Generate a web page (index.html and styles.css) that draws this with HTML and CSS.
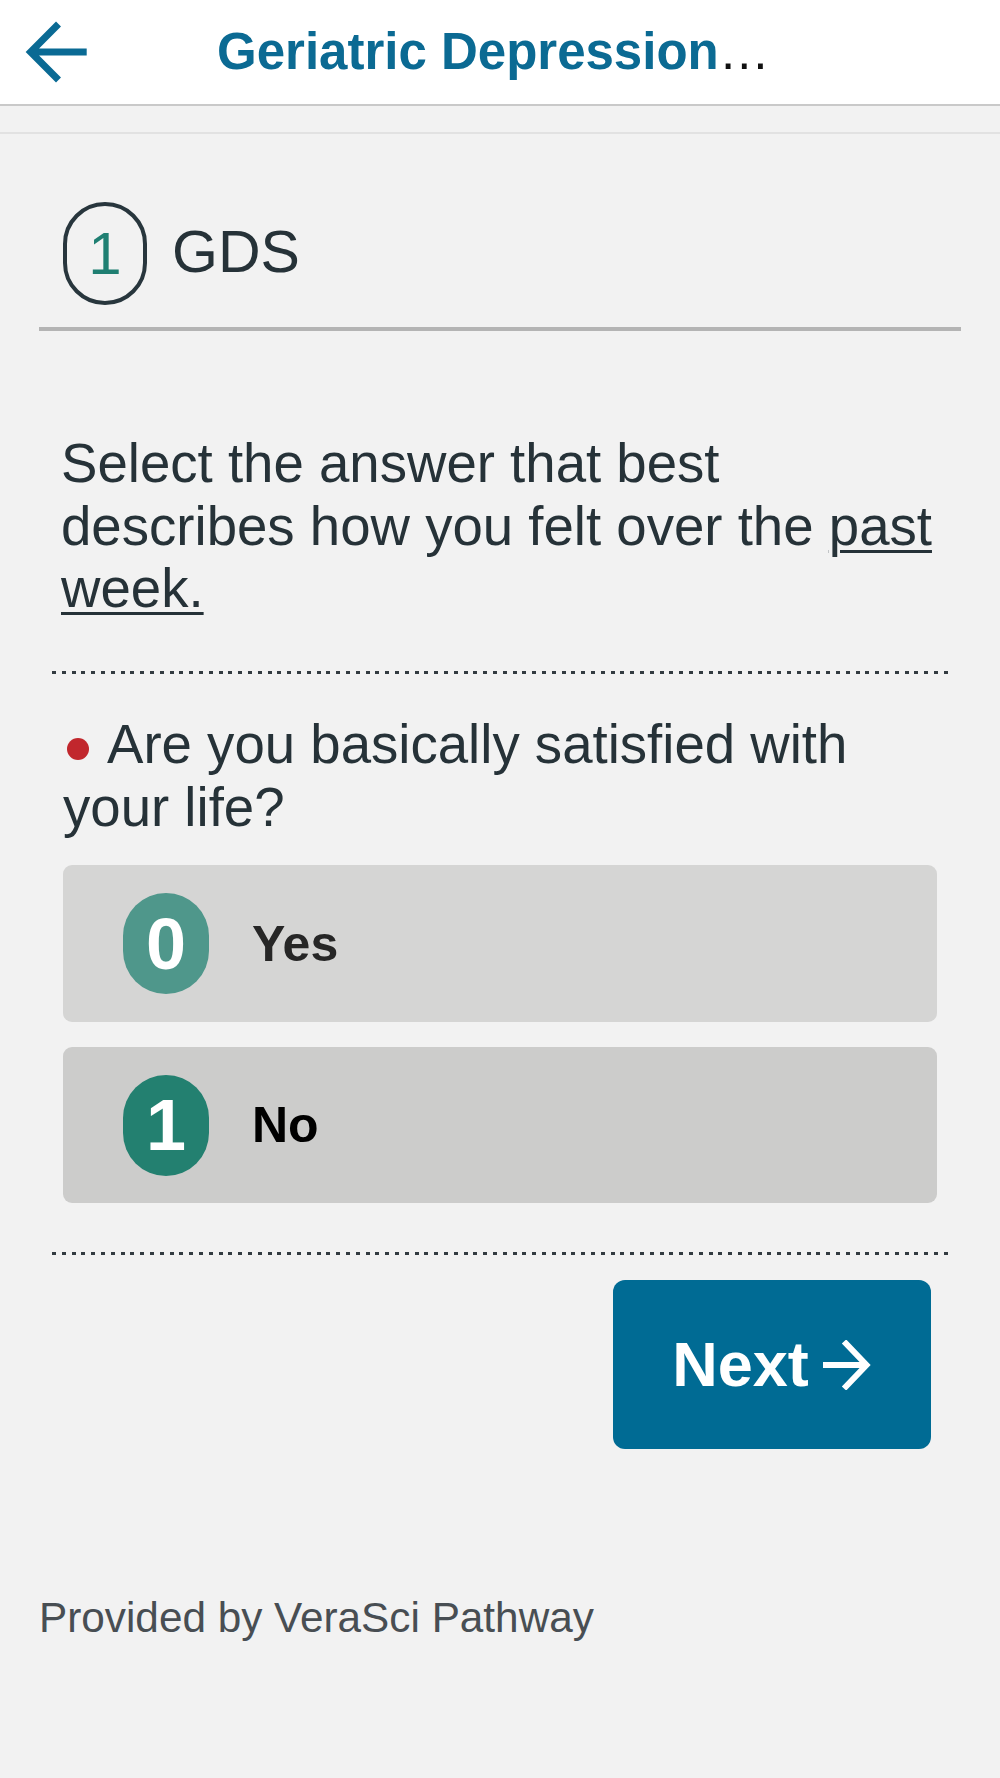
FILE: index.html
```html
<!DOCTYPE html>
<html lang="en">
<head>
<meta charset="utf-8">
<title>Geriatric Depression Scale</title>
<link rel="stylesheet" href="styles.css">
</head>
<body>
<header class="topbar">
  <svg class="back-icon" width="70" height="70" viewBox="0 0 70 70" aria-label="Back">
    <path d="M36.5 7 L8.6 35 L36.5 63 M8.6 35 H64.7" fill="none" stroke="#0a6a94" stroke-width="7" stroke-linejoin="miter"/>
  </svg>
  <h1 class="title"><span class="title-main">Geriatric Depression</span><span class="title-more">…</span></h1>
</header>
<div class="subbar"></div>

<main class="content">
  <section class="section-head">
    <div class="step-badge">1</div>
    <h2 class="section-name">GDS</h2>
  </section>

  <section class="form-body">
    <p class="instructions">Select the answer that best describes how you felt over the <u class="emph">past week.</u></p>
    <div class="dots"></div>

    <p class="question"><span class="req-dot"></span>Are you basically satisfied with your life?</p>

    <div class="options">
      <div class="option option-yes">
        <span class="score score-light">0</span>
        <span class="option-label">Yes</span>
      </div>
      <div class="option option-no">
        <span class="score score-dark">1</span>
        <span class="option-label label-strong">No</span>
      </div>
    </div>

    <div class="dots dots-bottom"></div>

    <div class="actions">
      <div class="next-btn">
        <span class="next-text">Next</span>
        <svg class="next-icon" width="50" height="50" viewBox="0 0 50 50" aria-hidden="true">
          <path d="M22 1.5 L44.5 25 L22 48.5 M1 25 H44" fill="none" stroke="#ffffff" stroke-width="6" stroke-linejoin="miter"/>
        </svg>
      </div>
    </div>
  </section>
</main>

<footer class="footer">Provided by VeraSci Pathway</footer>
</body>
</html>
```

FILE: styles.css
```css
html, body {
  margin: 0;
  padding: 0;
}

body {
  background: #f2f2f2;
  font-family: "Liberation Sans", Arial, sans-serif;
  color: #263238;
  min-height: 100vh;
}

.topbar {
  height: 104px;
  background: #ffffff;
  border-bottom: 2px solid #c9c9c9;
  display: flex;
  align-items: center;
  padding-left: 22px;
}

.back-icon {
  display: block;
  flex: none;
}

.title {
  margin: 0 0 0 125px;
  font-size: 51px;
  line-height: 60px;
  font-weight: normal;
  white-space: nowrap;
  color: #000;
}

.title-main {
  font-weight: bold;
  color: #0b6a93;
}

.title-more {
  color: #111;
}

.subbar {
  height: 26px;
  border-bottom: 2px solid #e2e2e2;
}

.content {
  margin: 0 39px;
}

.section-head {
  display: flex;
  align-items: center;
  padding: 68px 24px 22px;
  border-bottom: 4px solid #b4b4b4;
}

.step-badge {
  box-sizing: border-box;
  width: 84px;
  height: 103px;
  border: 4px solid #28363d;
  border-radius: 42px;
  display: flex;
  align-items: center;
  justify-content: center;
  color: #1f7f72;
  font-size: 60px;
  line-height: 1;
  flex: none;
}

.section-name {
  margin: -3px 0 0 25px;
  font-size: 59px;
  font-weight: normal;
  line-height: 64px;
  color: #263238;
}

.form-body {
  padding: 0 12px 0 13px;
}

.instructions {
  margin: 102px 0 0;
  padding-left: 9px;
  font-size: 54.6px;
  line-height: 62.5px;
}

.emph {
  text-decoration-thickness: 3px;
  text-underline-offset: 5px;
}

.dots {
  height: 3px;
  margin-top: 50.5px;
  background-image: repeating-linear-gradient(to right, #333b41 0 4px, transparent 4px 9.8px);
}

.question {
  margin: 40px 0 0;
  padding-left: 11px;
  font-size: 54.6px;
  line-height: 62.5px;
}

.req-dot {
  display: inline-block;
  width: 22px;
  height: 22px;
  border-radius: 50%;
  background: #c1272d;
  vertical-align: middle;
  margin: 0 18px 0 4px;
}

.options {
  margin: 26px 12px 0 11px;
  display: flex;
  flex-direction: column;
  gap: 25px;
}

.option {
  height: 157px;
  border-radius: 9px;
  display: flex;
  align-items: center;
  padding-left: 60px;
}

.option-yes {
  background: #d5d5d4;
}

.option-no {
  background: #cccccb;
  height: 156px;
}

.score {
  width: 86px;
  height: 101px;
  border-radius: 43px;
  display: flex;
  align-items: center;
  justify-content: center;
  color: #ffffff;
  font-weight: bold;
  font-size: 72px;
  line-height: 1;
  flex: none;
}

.score-light {
  background: #4f978b;
}

.score-dark {
  background: #238070;
}

.option-label {
  margin-left: 43px;
  font-size: 50px;
  font-weight: bold;
  color: #262626;
}

.label-strong {
  color: #000000;
}

.dots-bottom {
  margin-top: 49px;
}

.actions {
  display: flex;
  justify-content: flex-end;
  padding-right: 18px;
  margin-top: 25px;
}

.next-btn {
  width: 318px;
  height: 169px;
  border-radius: 12px;
  background: #006b94;
  display: flex;
  align-items: center;
  justify-content: center;
  gap: 13px;
}

.next-text {
  color: #ffffff;
  font-weight: bold;
  font-size: 63px;
  line-height: 1;
}

.next-icon {
  display: block;
  flex: none;
}

.footer {
  margin-top: 144px;
  padding-left: 39px;
  font-size: 42.3px;
  line-height: 50px;
  color: #484e53;
}
```
